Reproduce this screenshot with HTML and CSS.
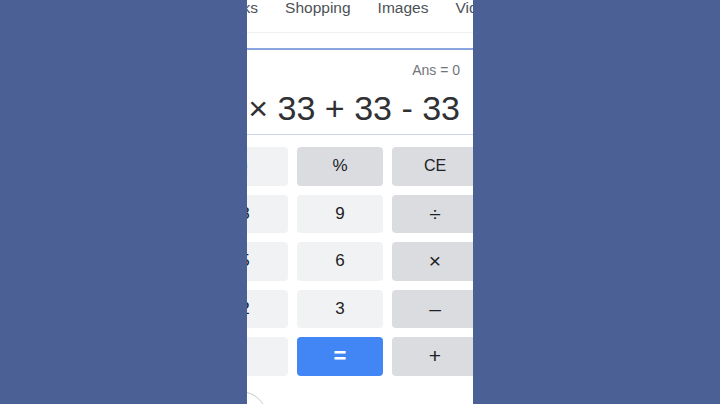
FILE: index.html
```html
<!DOCTYPE html>
<html>
<head>
<meta charset="utf-8">
<link rel="stylesheet" href="styles.css">
</head>
<body>
<div class="stage">
  <div class="panel">
    <div class="tabs">
      <span class="tab">Books</span>
      <span class="tab">Shopping</span>
      <span class="tab">Images</span>
      <span class="tab">Videos</span>
    </div>
    <div class="display">
      <div class="ans">Ans = 0</div>
      <div class="expr"><span>× 33 + 33 - 33</span></div>
    </div>
    <div class="keys">
      <div class="key num">)</div>
      <div class="key op">%</div>
      <div class="key op ce">CE</div>
      <div class="key num">8</div>
      <div class="key num">9</div>
      <div class="key op sym">÷</div>
      <div class="key num">5</div>
      <div class="key num">6</div>
      <div class="key op sym">×</div>
      <div class="key num">2</div>
      <div class="key num">3</div>
      <div class="key op sym">–</div>
      <div class="key num">.</div>
      <div class="key eq">=</div>
      <div class="key op sym">+</div>
    </div>
    <div class="circle"></div>
  </div>
</div>
</body>
</html>
```
FILE: styles.css
```css
html, body {
  margin: 0;
  padding: 0;
}
body {
  width: 720px;
  height: 404px;
  overflow: hidden;
  background: #4b6094;
  font-family: "Liberation Sans", Arial, sans-serif;
}
.stage {
  display: flex;
  height: 404px;
}
.panel {
  margin-left: 247px;
  width: 226px;
  height: 404px;
  background: #ffffff;
  overflow: hidden;
}
.tabs {
  display: flex;
  gap: 27px;
  margin-left: -32px;
  margin-top: -1px;
  height: 33px;
  border-bottom: 1px solid #f0f1f3;
  white-space: nowrap;
  font-size: 15.5px;
  line-height: 17px;
  color: #4d5156;
}
.tab {
  flex: none;
}
.display {
  margin-top: 15px;
  border-top: 2px solid #8aa4e0;
  border-bottom: 1px solid #c9d3ea;
  padding: 12px 13px 7px 0;
}
.ans {
  text-align: right;
  font-size: 14px;
  line-height: 16px;
  color: #70757a;
}
.expr {
  margin-top: 11px;
  display: flex;
  justify-content: flex-end;
  white-space: nowrap;
  overflow: hidden;
  font-size: 34px;
  line-height: 38px;
  color: #303134;
}
.keys {
  display: grid;
  grid-template-columns: 86px 86px 86px;
  grid-auto-rows: 38.5px;
  column-gap: 9px;
  row-gap: 9px;
  margin-top: 12px;
  margin-left: -45px;
  width: 276px;
}
.key {
  display: flex;
  align-items: center;
  justify-content: center;
  border-radius: 4px;
  font-size: 17px;
  color: #202124;
}
.num {
  background: #f1f2f4;
}
.op {
  background: #dadce0;
}
.ce {
  font-size: 16px;
}
.sym {
  font-size: 21px;
  font-weight: 300;
}
.eq {
  background: #4285f4;
  color: #ffffff;
  font-size: 22px;
  font-weight: bold;
}
.circle {
  width: 56px;
  height: 56px;
  box-sizing: border-box;
  border: 1px solid #c4c7cc;
  border-radius: 50%;
  margin-top: 15px;
  margin-left: -35px;
}
```
